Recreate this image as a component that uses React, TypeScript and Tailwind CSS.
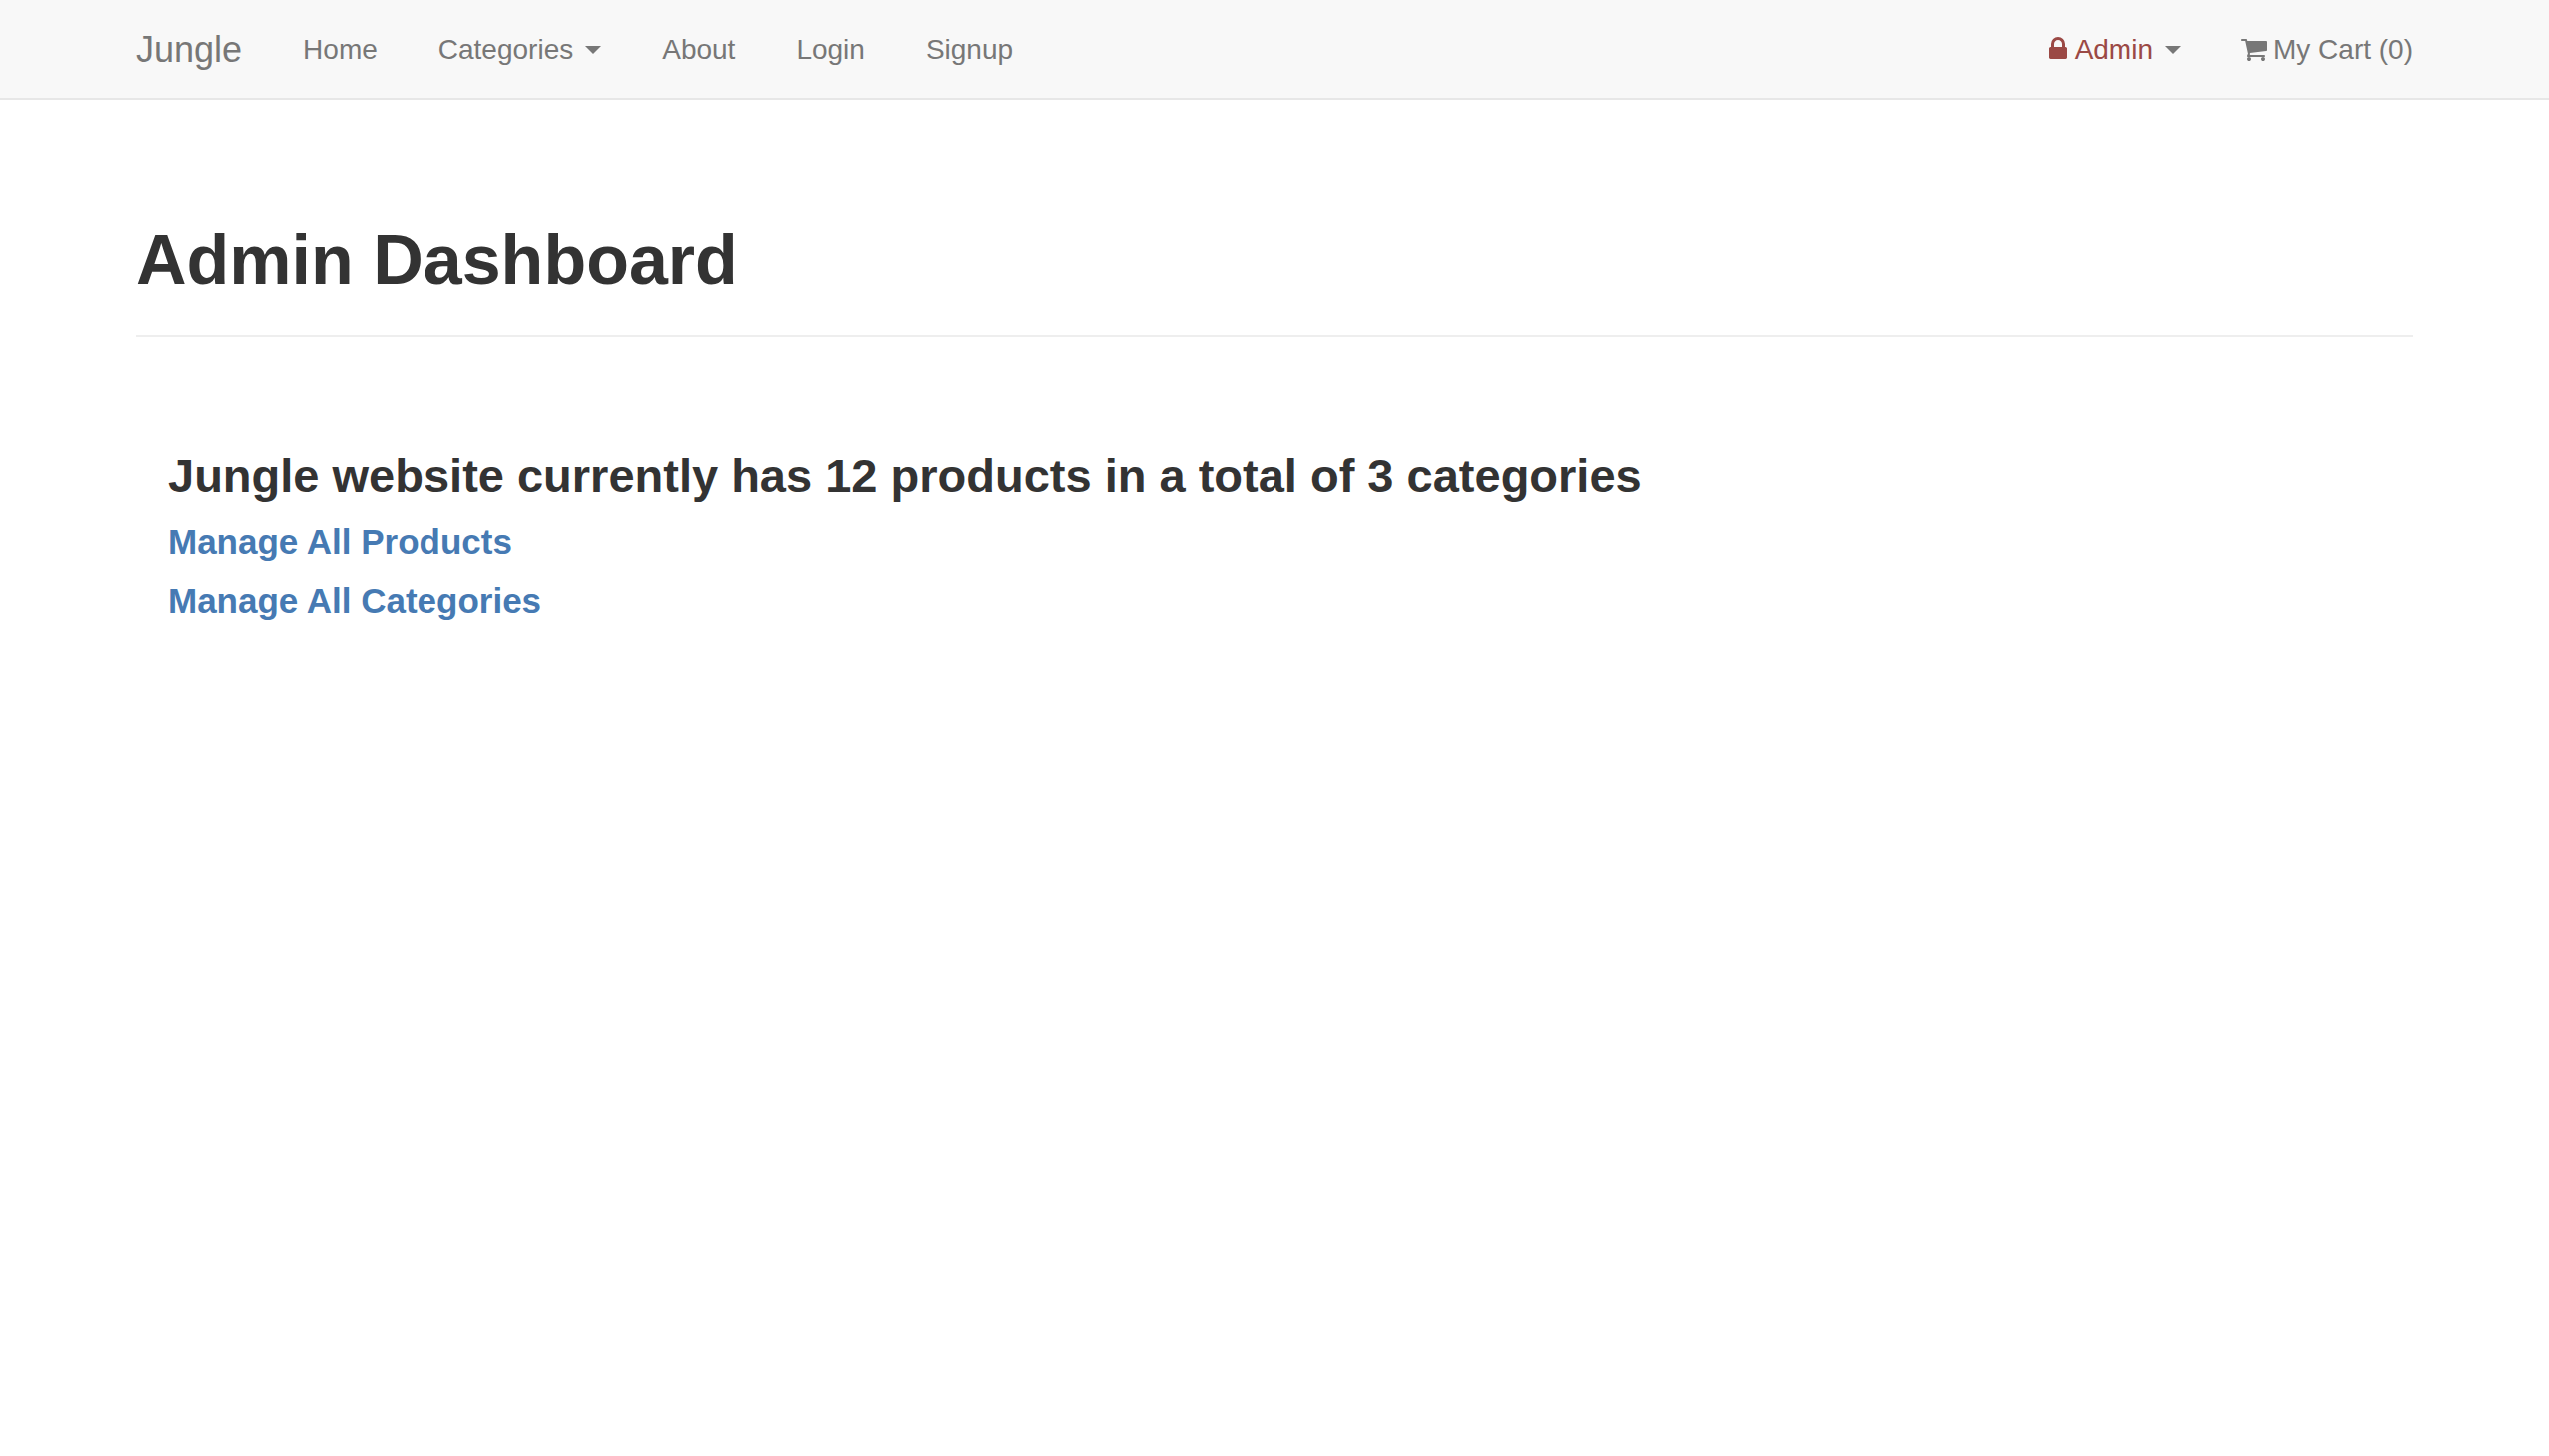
function Caret() {
  return (
    <svg className="ml-3 h-2 w-4 text-[#777]" viewBox="0 0 16 8" fill="currentColor" aria-hidden="true">
      <path d="M0 0h16L8 8z" />
    </svg>
  );
}

function LockIcon() {
  return (
    <svg className="mr-2 mb-1 h-[22px] w-[18px]" viewBox="0 0 1152 1408" fill="currentColor" aria-hidden="true">
      <path d="M320 640h512V448q0-106-75-181t-181-75-181 75-75 181v192zm832 96v576q0 40-28 68t-68 28H96q-40 0-68-28t-28-68V736q0-40 28-68t68-28h32V448q0-184 132-316T576 0t316 132 132 316v192h32q40 0 68 28t28 68z" />
    </svg>
  );
}

function CartIcon() {
  return (
    <svg className="mr-1.5 h-[22px] w-[26px]" viewBox="0 256 1664 1408" fill="currentColor" aria-hidden="true">
      <path d="M640 1536q0 52-38 90t-90 38-90-38-38-90 38-90 90-38 90 38 38 90zm896 0q0 52-38 90t-90 38-90-38-38-90 38-90 90-38 90 38 38 90zm128-1088v512q0 24-16.500 42.500t-40.500 21.500l-1044 122q13 60 13 70 0 16-24 64h920q26 0 45 19t19 45-19 45-45 19H448q-26 0-45-19t-19-45q0-11 8-31.500t16-36 21.500-40 15.500-29.500L268 384H64q-26 0-45-19T0 320t19-45 45-19h256q16 0 28.500 6.500T368 278t13 24.500 8 26 5.500 29.500 4.500 26h1201q26 0 45 19t19 45z" />
    </svg>
  );
}

export default function App() {
  return (
    <div className="min-h-screen bg-white font-['Liberation_Sans',sans-serif] text-[#333]">
      <nav className="flex h-[100px] items-center justify-between border-b-2 border-[#e7e7e7] bg-[#f8f8f8] px-[136px] pt-px text-[28px] text-[#777]">
        <div className="flex items-center gap-[61px]">
          <a href="#" className="text-4xl">Jungle</a>
          <a href="#">Home</a>
          <button className="flex items-center">Categories<Caret /></button>
          <a href="#">About</a>
          <a href="#">Login</a>
          <a href="#">Signup</a>
        </div>
        <div className="flex items-center gap-[60px]">
          <button className="flex items-center text-[#9b4945]"><LockIcon />Admin<Caret /></button>
          <a href="#" className="flex items-center"><CartIcon />My Cart (0)</a>
        </div>
      </nav>
      <main className="px-[136px] pt-[120px]">
        <header className="border-b-2 border-[#eee] pb-[35px]">
          <h1 className="text-[70px] leading-[80px] font-bold">Admin Dashboard</h1>
        </header>
        <section className="px-8 pt-[114px]">
          <h2 className="text-[47px] leading-[52px] font-bold">Jungle website currently has 12 products in a total of 3 categories</h2>
          <h3 className="mt-5 text-[35px] leading-[39px] font-bold text-[#467ab3]"><a href="#">Manage All Products</a></h3>
          <h3 className="mt-5 text-[35px] leading-[39px] font-bold text-[#467ab3]"><a href="#">Manage All Categories</a></h3>
        </section>
      </main>
    </div>
  );
}
